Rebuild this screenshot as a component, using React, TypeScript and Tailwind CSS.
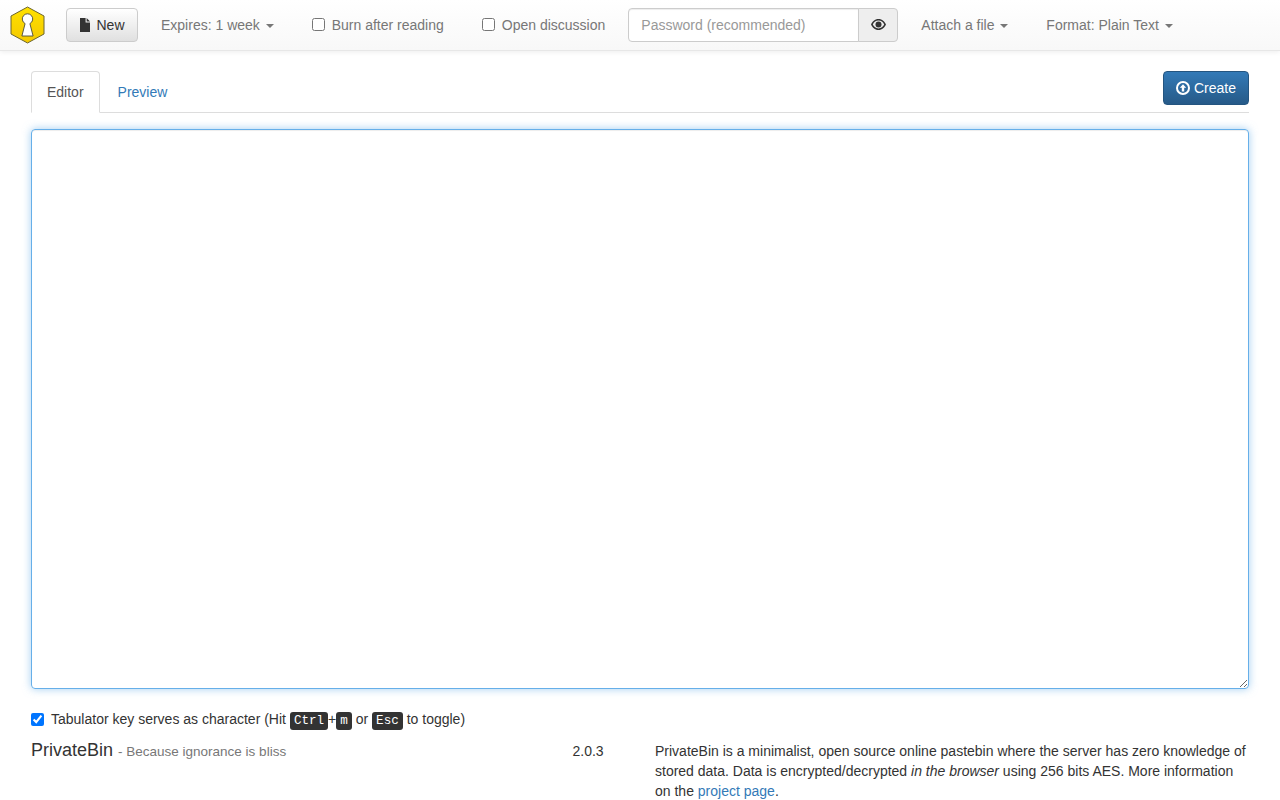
import React from "react";

const Caret = () => (
  <span className="ml-[2px] inline-block h-0 w-0 border-x-[4px] border-t-[4px] border-x-transparent border-t-[#777] align-middle" />
);

const Logo = () => (
  <svg width="36" height="38" viewBox="0 0 36 38" className="shrink-0">
    <defs>
      <linearGradient id="hex" x1="0" y1="0" x2="0" y2="1">
        <stop offset="0" stopColor="#ffe100" />
        <stop offset="1" stopColor="#f3c800" />
      </linearGradient>
    </defs>
    <polygon points="18.5,1 35,10 35,28 18.5,37 2,28 2,10" fill="url(#hex)" stroke="#6b6530" strokeWidth="1" />
    <path d="M16.1 17.6 12.9 30H24.1L20.9 17.6a5.2 5.2 0 1 0-4.8 0z" fill="#fff" stroke="#4a4a3a" strokeWidth="0.9" />
  </svg>
);

const FileIcon = () => (
  <svg width="12" height="14" viewBox="0 0 12 14" className="mr-[5px]">
    <path d="M1 0h5.6v4.6H11V14H1z" fill="#333" />
    <path d="M7.6 0 11 3.6H7.6z" fill="#333" />
  </svg>
);

const EyeIcon = () => (
  <svg width="15" height="11" viewBox="0 0 15 11">
    <path fillRule="evenodd" d="M7.5 0C3.8 0 1.2 2.6 0 5.5 1.2 8.4 3.8 11 7.5 11S13.8 8.4 15 5.5C13.8 2.6 11.2 0 7.5 0zm0 1.6c2.6 0 4.6 1.6 5.7 3.9-1.1 2.3-3.1 3.9-5.7 3.9S2.9 7.8 1.8 5.5C2.9 3.2 4.9 1.6 7.5 1.6z" fill="#333" />
    <circle cx="7.5" cy="5.4" r="3" fill="#333" />
  </svg>
);

const UpIcon = () => (
  <svg width="14" height="14" viewBox="0 0 14 14" className="mr-[4px]">
    <path fillRule="evenodd" d="M7 0a7 7 0 1 0 0 14A7 7 0 0 0 7 0zm0 2a5 5 0 1 1 0 10A5 5 0 0 1 7 2z" fill="#fff" />
    <path d="M7 3.2 10.2 6.8H8.2V10.4H5.8V6.8H3.8z" fill="#fff" />
  </svg>
);

const Kbd = ({ children }: { children: React.ReactNode }) => (
  <kbd className="inline-block rounded-[3px] bg-[#333] px-[4px] py-[2px] align-baseline font-['Liberation_Mono',monospace] text-[12.6px] leading-[14px] text-white">
    {children}
  </kbd>
);

export default function App() {
  return (
    <div className="h-screen overflow-hidden bg-white font-['Liberation_Sans',Arial,sans-serif] text-sm leading-5 text-[#333]">
      <nav className="flex h-[51px] items-center border-b border-[#e7e7e7] bg-gradient-to-b from-white to-[#f8f8f8] pb-px shadow-[0_1px_5px_rgba(0,0,0,0.075)]">
        <div className="ml-[9px]"><Logo /></div>
        <button className="ml-[21px] flex h-[34px] w-[72px] items-center justify-center rounded border border-[#ccc] bg-gradient-to-b from-white to-[#e0e0e0] text-[#333]">
          <FileIcon />New
        </button>
        <div className="ml-[23px] text-[#777]">Expires: 1 week <Caret /></div>
        <label className="ml-[38px] flex items-center text-[#777]">
          <input type="checkbox" className="mr-[7px] h-[13px] w-[13px]" />Burn after reading
        </label>
        <label className="ml-[38px] flex items-center text-[#777]">
          <input type="checkbox" className="mr-[7px] h-[13px] w-[13px]" />Open discussion
        </label>
        <div className="ml-[23px] flex h-[34px]">
          <input
            placeholder="Password (recommended)"
            className="h-[34px] w-[231px] rounded-l border border-[#ccc] bg-white px-3 text-[#555] shadow-[inset_0_1px_1px_rgba(0,0,0,0.075)] outline-none placeholder:text-[#999]"
          />
          <div className="ml-[-1px] flex h-[34px] w-[40px] items-center justify-center rounded-r border border-[#ccc] bg-[#eee]">
            <EyeIcon />
          </div>
        </div>
        <div className="ml-[23px] text-[#777]">Attach a file <Caret /></div>
        <div className="ml-[38px] text-[#777]">Format: Plain Text <Caret /></div>
      </nav>

      <main className="px-[31px] pt-5">
        <div className="flex h-[42px] items-start justify-between border-b border-[#ddd]">
          <div className="flex">
            <div className="h-[42px] rounded-t border border-[#ddd] border-b-white bg-white px-[15px] py-[10px] text-[#555]">Editor</div>
            <div className="ml-[3px] px-[15px] pt-[11px] text-[#337ab7]">Preview</div>
          </div>
          <button className="flex h-[34px] w-[86px] items-center justify-center rounded border border-[#245580] bg-gradient-to-b from-[#337ab7] to-[#265a88] text-white">
            <UpIcon />Create
          </button>
        </div>

        <textarea className="mt-4 block h-[560px] w-full rounded border border-[#66afe9] p-0 shadow-[inset_0_1px_1px_rgba(0,0,0,0.075),0_0_8px_rgba(102,175,233,0.6)] outline-none" />

        <label className="mt-[20px] flex h-5 items-center">
          <input type="checkbox" defaultChecked className="mr-[7px] h-[13px] w-[13px]" />
          <span>
            Tabulator key serves as character (Hit <Kbd>Ctrl</Kbd>+<Kbd>m</Kbd> or <Kbd>Esc</Kbd> to toggle)
          </span>
        </label>

        <footer className="mt-[11px] grid grid-cols-[541.5px_82.5px_1fr]">
          <h4 className="text-lg leading-5 font-normal">
            PrivateBin <small className="text-[13.5px] text-[#777]">- Because ignorance is bliss</small>
          </h4>
          <div className="pt-px">2.0.3</div>
          <p className="pt-px">
            PrivateBin is a minimalist, open source online pastebin where the server has zero knowledge of stored data. Data is encrypted/decrypted <em>in the browser</em> using 256 bits AES. More information on the <span className="text-[#337ab7]">project page</span>.
          </p>
        </footer>
      </main>
    </div>
  );
}
